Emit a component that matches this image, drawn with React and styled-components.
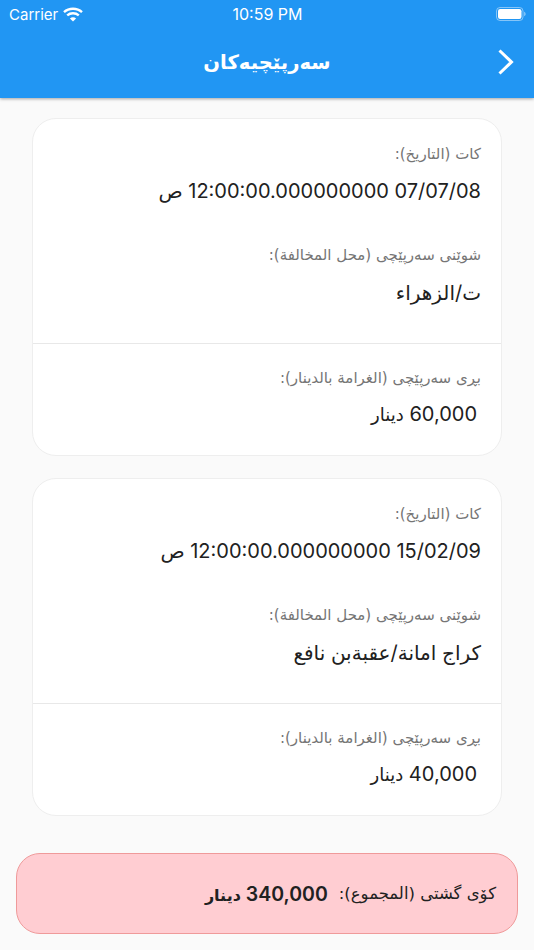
import React from "react";
import styled, { createGlobalStyle } from "styled-components";

const Global = createGlobalStyle`
    html, body {
        margin: 0;
        padding: 0;
        background: #fafafa;
    }
    body {
        font-family: Inter, "DejaVu Sans", sans-serif;
    }
`;

const Page = styled.div`
    width: 534px;
    height: 950px;
    overflow: hidden;
    display: flex;
    flex-direction: column;
    background: #fafafa;
`;

const AppBar = styled.header`
    height: 98px;
    flex-shrink: 0;
    display: flex;
    flex-direction: column;
    background: #2196f3;
    color: #fff;
    box-shadow: 0 1px 3px rgba(0, 0, 0, 0.35);
`;

const StatusBar = styled.div`
    height: 28px;
    display: grid;
    grid-template-columns: 1fr auto 1fr;
    align-items: center;
    padding: 0 8px 0 9px;
    font-family: Inter, sans-serif;
    font-size: 16px;
`;

const Carrier = styled.div`
    display: flex;
    align-items: center;
    gap: 5px;
    font-size: 15px;
`;

const BatteryWrap = styled.div`
    display: flex;
    justify-content: flex-end;
`;

const TitleRow = styled.div`
    flex: 1;
    display: flex;
    align-items: center;
    justify-content: center;
    position: relative;
`;

const Title = styled.h1`
    margin: 0 0 2px;
    font-family: "DejaVu Sans", sans-serif;
    font-size: 19.6px;
    font-weight: 700;
    direction: rtl;
`;

const BackIcon = styled.svg`
    position: absolute;
    right: 20px;
    top: 21px;
`;

const List = styled.main`
    display: flex;
    flex-direction: column;
    gap: 22px;
    padding: 20px 32px 0;
`;

const Card = styled.section`
    height: 338px;
    box-sizing: border-box;
    display: flex;
    flex-direction: column;
    background: #fff;
    border: 1px solid #eeeeee;
    border-radius: 24px;
    direction: rtl;
`;

const Details = styled.div`
    height: 225px;
    box-sizing: border-box;
    padding: 23px 20px 0;
    border-bottom: 1px solid #e8e8e8;
    display: flex;
    flex-direction: column;
`;

const Field = styled.div`
    height: 105px;
`;

const Label = styled.div`
    font-family: "DejaVu Sans", sans-serif;
    font-size: 15px;
    line-height: 24px;
    color: #757575;
`;

const Value = styled.div`
    margin-top: ${props => props.$gap || 12}px;
    padding-right: ${props => props.$inset || 0}px;
    font-family: Inter, "DejaVu Sans", sans-serif;
    font-size: 20px;
    line-height: 26px;
    color: #212121;
`;

const Unit = styled.span`
    font-size: ${props => props.$size}px;
`;

const Fine = styled.div`
    padding: 22px 20px 0;
`;

const Total = styled.footer`
    margin: 37px 16px 0;
    height: 81px;
    box-sizing: border-box;
    display: flex;
    align-items: center;
    gap: 11px;
    padding: 0 21px;
    direction: rtl;
    background: #ffcdd2;
    border: 1px solid #ef9a9a;
    border-radius: 24px;
    color: #212121;
`;

const TotalLabel = styled.span`
    font-family: "DejaVu Sans", sans-serif;
    font-size: 16.5px;
`;

const TotalValue = styled.span`
    font-family: Inter, "DejaVu Sans", sans-serif;
    font-size: 19.5px;
    font-weight: 600;
`;

const violations = [
    { date: "07/07/08 12:00:00.000000000 ص", place: "ت/الزهراء", fine: "60,000" },
    { date: "15/02/09 12:00:00.000000000 ص", place: "كراج امانة/عقبةبن نافع", fine: "40,000" },
];

function Wifi() {
    return (
        <svg width="20" height="15" viewBox="0 0 20 15" fill="none" stroke="#fff" strokeWidth="2.4">
            <path d="M1 5.2 C6 0.6 14 0.6 19 5.2" />
            <path d="M4.2 8.4 C7.4 5.6 12.6 5.6 15.8 8.4" />
            <path d="M10 14.6 L6.9 11.4 C8.7 9.9 11.3 9.9 13.1 11.4 Z" fill="#fff" stroke="none" />
        </svg>
    );
}

function Battery() {
    return (
        <svg width="30" height="14" viewBox="0 0 30 14">
            <rect x="0.5" y="0.5" width="26.5" height="13" rx="3.5" fill="none" stroke="#fff" strokeOpacity="0.45" />
            <rect x="2" y="2" width="23.5" height="10" rx="2.2" fill="#fff" />
            <path d="M28.2 4.8 C29.2 5.2 29.6 6 29.6 7 C29.6 8 29.2 8.8 28.2 9.2 Z" fill="#fff" fillOpacity="0.5" />
        </svg>
    );
}

function Violation({ item }) {
    return (
        <Card>
            <Details>
                <Field>
                    <Label>كات (التاريخ):</Label>
                    <Value>{item.date}</Value>
                </Field>
                <Field>
                    <Label>شوێنی سەرپێچی (محل المخالفة):</Label>
                    <Value $gap={13}>{item.place}</Value>
                </Field>
            </Details>
            <Fine>
                <Label>بڕی سەرپێچی (الغرامة بالدينار):</Label>
                <Value $gap={11} $inset={4}>
                    {item.fine} <Unit $size={18}>دينار</Unit>
                </Value>
            </Fine>
        </Card>
    );
}

export default function App() {
    return (
        <Page>
            <Global />
            <AppBar>
                <StatusBar>
                    <Carrier>
                        Carrier
                        <Wifi />
                    </Carrier>
                    <span>10:59 PM</span>
                    <BatteryWrap>
                        <Battery />
                    </BatteryWrap>
                </StatusBar>
                <TitleRow>
                    <Title>سەرپێچیەکان</Title>
                    <BackIcon width="16" height="26" viewBox="0 0 16 26" fill="none" stroke="#fff" strokeWidth="3">
                        <path d="M1.5 1.5 L13.5 13 L1.5 24.5" />
                    </BackIcon>
                </TitleRow>
            </AppBar>
            <List>
                {violations.map(v => (
                    <Violation key={v.date} item={v} />
                ))}
            </List>
            <Total>
                <TotalLabel>كۆی گشتی (المجموع):</TotalLabel>
                <TotalValue>
                    340,000 <Unit $size={16}>دينار</Unit>
                </TotalValue>
            </Total>
        </Page>
    );
}
